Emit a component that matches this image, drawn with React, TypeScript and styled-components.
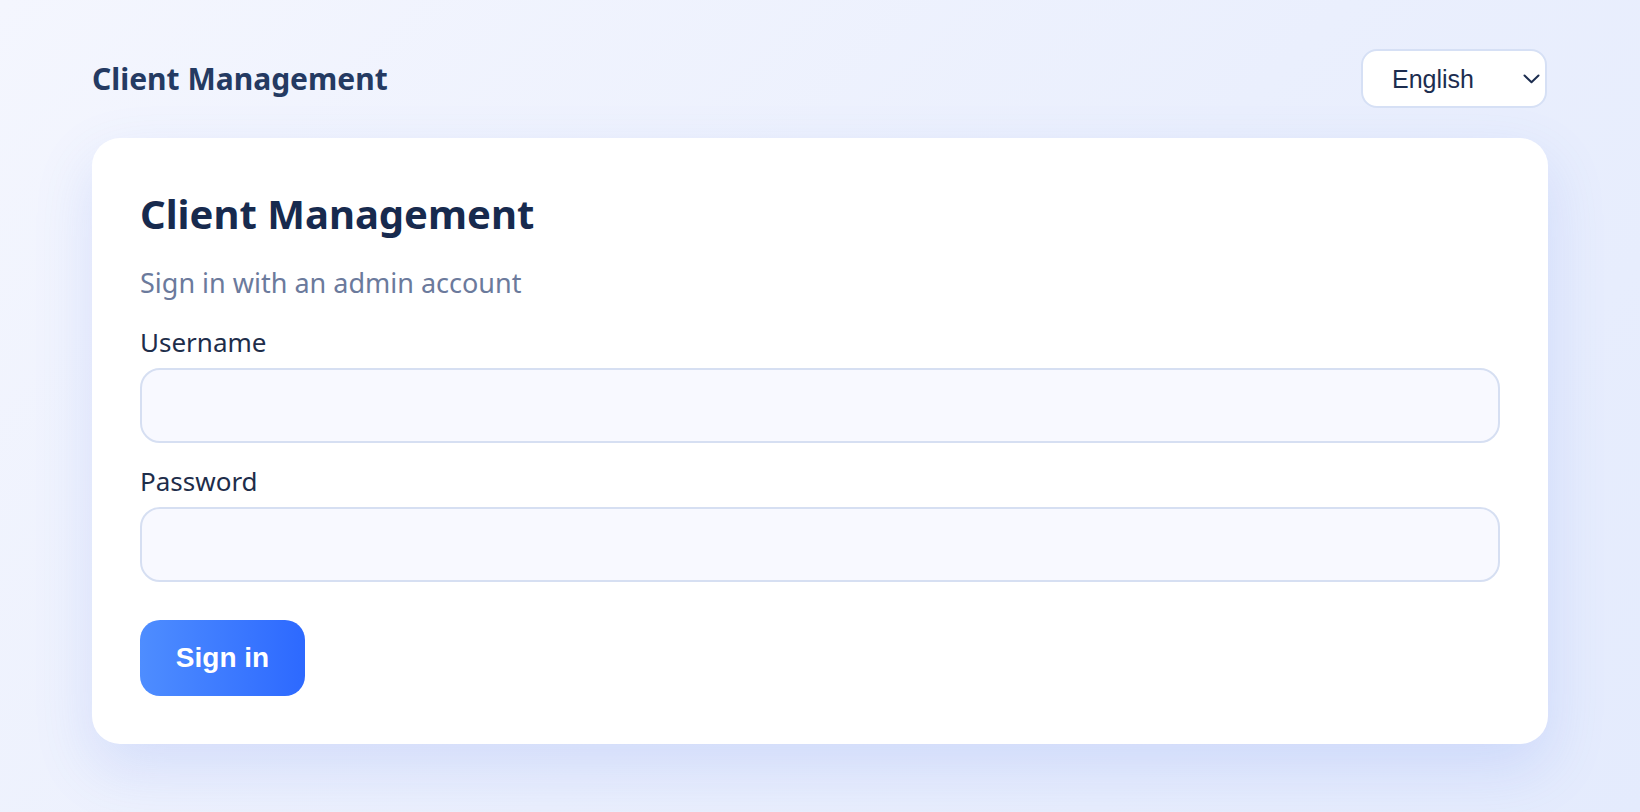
import React from "react";
import styled, { createGlobalStyle } from "styled-components";

const GlobalStyle = createGlobalStyle`
	html, body {
		margin: 0;
		padding: 0;
	}
	body {
		min-height: 812px;
		font-family: "Noto Sans", "Open Sans", sans-serif;
		background: linear-gradient(135deg, #f4f6fe 0%, #eaeffd 55%, #e4ebfd 100%);
	}
`;

function App() {
	return (
		<Page>
			<GlobalStyle />
			<TopBar>
				<Brand>Client Management</Brand>
				<LangWrap>
					<LangSelect defaultValue="en">
						<option value="en">English</option>
						<option value="ko">한국어</option>
					</LangSelect>
					<Chevron width="17" height="10" viewBox="0 0 17 10" fill="none">
						<path d="M1.5 1.5L8.5 8.2L15.5 1.5" stroke="#1c2d4f" strokeWidth="2" strokeLinecap="round" strokeLinejoin="round" />
					</Chevron>
				</LangWrap>
			</TopBar>
			<Card>
				<Title>Client Management</Title>
				<Subtitle>Sign in with an admin account</Subtitle>
				<Form onSubmit={(e) => e.preventDefault()}>
					<Field>
						<Label htmlFor="username">Username</Label>
						<Input id="username" type="text" />
					</Field>
					<Field>
						<Label htmlFor="password">Password</Label>
						<Input id="password" type="password" />
					</Field>
					<SubmitButton type="submit">Sign in</SubmitButton>
				</Form>
			</Card>
		</Page>
	);
}

export default App;

const Page = styled.div`
	padding: 49px 92px 60px 92px;
	display: flex;
	flex-direction: column;
	gap: 30px;
`;

const TopBar = styled.header`
	display: flex;
	align-items: center;
	justify-content: space-between;
	height: 59px;
`;

const Brand = styled.h2`
	margin: 0;
	font-size: 30px;
	font-weight: 700;
	color: #243a62;
`;

const LangWrap = styled.div`
	position: relative;
	width: 186px;
	height: 59px;
	margin-right: 1px;
`;

const LangSelect = styled.select`
	appearance: none;
	width: 100%;
	height: 100%;
	box-sizing: border-box;
	padding: 0 0 0 29px;
	font-family: "Liberation Sans", Arial, sans-serif;
	font-size: 25px;
	color: #1c2d4f;
	background: #ffffff;
	border: 2px solid #d6e0f5;
	border-radius: 16px;
	outline: none;
`;

const Chevron = styled.svg`
	position: absolute;
	right: 7px;
	top: 25px;
	pointer-events: none;
`;

const Card = styled.main`
	background: #ffffff;
	border-radius: 28px;
	padding: 48px;
	box-shadow: 0 24px 60px rgba(80, 120, 235, 0.16);
`;

const Title = styled.h1`
	margin: 0;
	font-size: 40px;
	font-weight: 700;
	color: #172a4e;
`;

const Subtitle = styled.p`
	margin: 23px 0 23px 0;
	font-size: 27px;
	color: #6b7a9c;
`;

const Form = styled.form`
	display: flex;
	flex-direction: column;
	gap: 20px;
`;

const Field = styled.div`
	display: flex;
	flex-direction: column;
	gap: 8px;
`;

const Label = styled.label`
	font-size: 26px;
	color: #1e2d4a;
`;

const Input = styled.input`
	box-sizing: border-box;
	height: 75px;
	width: 100%;
	padding: 0 22px;
	font-size: 24px;
	font-family: "Noto Sans", sans-serif;
	background: #f8f9ff;
	border: 2px solid #d6dff2;
	border-radius: 20px;
	outline: none;
`;

const SubmitButton = styled.button`
	align-self: flex-start;
	margin-top: 18px;
	width: 165px;
	height: 76px;
	border: none;
	border-radius: 20px;
	background: linear-gradient(90deg, #4e8dff 0%, #2d69ff 100%);
	color: #ffffff;
	font-family: "Liberation Sans", Arial, sans-serif;
	font-size: 28px;
	font-weight: 700;
	cursor: pointer;
`;
